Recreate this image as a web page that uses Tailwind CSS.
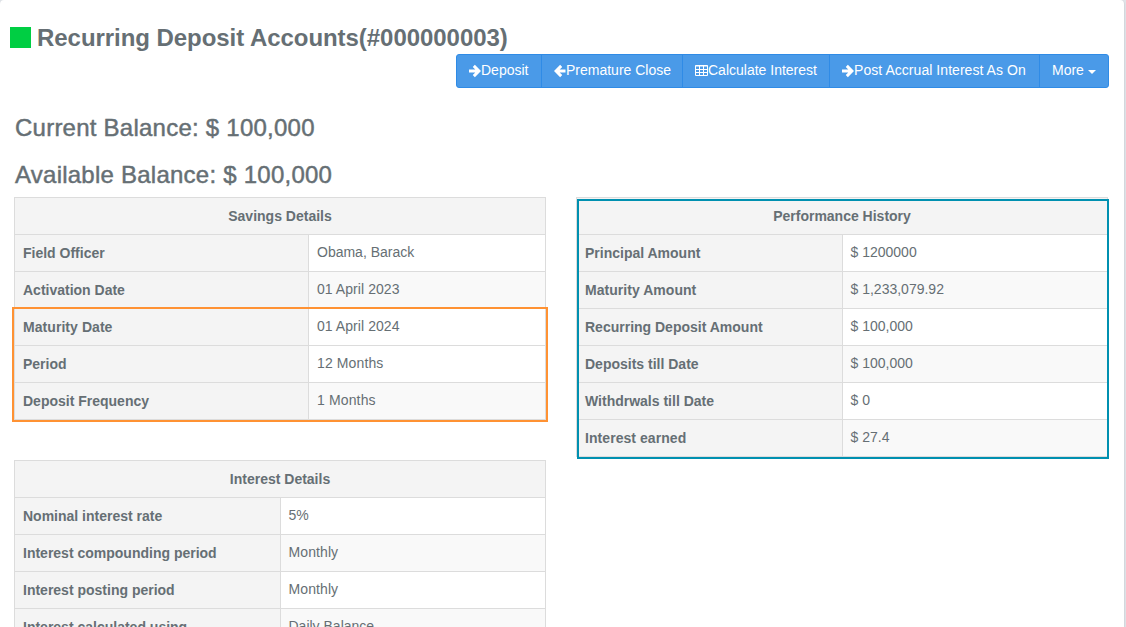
<!DOCTYPE html>
<html lang="en">
<head>
<meta charset="utf-8">
<title>Recurring Deposit Accounts</title>
<script src="https://cdn.jsdelivr.net/npm/@tailwindcss/browser@4"></script>
</head>
<body class="h-[627px] overflow-hidden bg-[#dfe3e8] font-['Liberation_Sans',Arial,sans-serif] text-sm text-[#666f74]">
<main class="flex h-[627px] w-[1124px] flex-col overflow-hidden rounded-t bg-white shadow-[0_1px_2px_rgba(0,0,0,0.2)]">
  <header class="flex h-[54px] shrink-0 items-center gap-[6px] pt-[21px] pl-[10px]">
    <span class="size-[21px] bg-[#00ce43]"></span>
    <h1 class="text-2xl font-bold tracking-[-0.05px] whitespace-nowrap">Recurring Deposit Accounts(#000000003)</h1>
  </header>

  <nav class="mr-[15px] flex h-[34px] w-[653px] shrink-0 self-end overflow-hidden rounded-[3px] border border-[#2f8be6] bg-[#4a9ae8] leading-[31px] whitespace-nowrap text-white">
    <a class="flex w-[85px] border-r border-[#2f8be6] pl-[11px]"><svg class="mt-[9px] h-[14px] w-[13px] shrink-0" viewBox="0 0 13 14" fill="none" stroke="currentColor" stroke-width="3"><path d="M1 7H10.5M5.8 1.9L10.9 7L5.8 12.1"/></svg>Deposit</a>
    <a class="flex w-[141px] border-r border-[#2f8be6] pl-[12px]"><svg class="mt-[9px] h-[14px] w-[12px] shrink-0" viewBox="0 0 12 14" fill="none" stroke="currentColor" stroke-width="3"><path d="M11.5 7H2.5M7.2 1.9L2.1 7L7.2 12.1"/></svg>Premature Close</a>
    <a class="flex w-[147px] border-r border-[#2f8be6] pl-[12px]"><svg class="mt-[9px] h-[12px] w-[13px] shrink-0" viewBox="0 0 13 12" fill="none" stroke="currentColor"><path d="M.5 1.5H12.5V11.5H.5ZM.5 2H12.5M.5 5.5H12.5M.5 8.5H12.5M4.5 1V12M8.5 1V12"/></svg>Calculate Interest</a>
    <a class="flex w-[210px] border-r border-[#2f8be6] pl-[12px] tracking-[0.05px]"><svg class="mt-[9px] h-[14px] w-[12px] shrink-0" viewBox="0 0 12 14" fill="none" stroke="currentColor" stroke-width="3"><path d="M0 7H9.5M4.8 1.9L9.9 7L4.8 12.1"/></svg>Post Accrual Interest As On</a>
    <a class="flex pl-[12px]">More<svg class="mt-[15px] ml-[4px] h-[4px] w-[8px]" viewBox="0 0 8 4" fill="currentColor"><path d="M0 0H8L4 4Z"/></svg></a>
  </nav>

  <section class="flex h-[109px] shrink-0 flex-col pt-[16px] pl-[15px] text-2xl leading-[47px] tracking-[0.24px] whitespace-nowrap [-webkit-text-stroke:0.45px_#666f74]">
    <h2>Current Balance: $ 100,000</h2>
    <h2>Available Balance: $ 100,000</h2>
  </section>

  <div class="flex min-h-0 flex-1 gap-[30px] pl-[14px]">
    <div class="flex w-[532px] flex-col gap-[40px] *:shrink-0">
      <section class="relative border-x border-t border-[#dcdcdc] *:h-[37px] *:border-b *:border-[#dcdcdc]">
        <h3 class="bg-[#f4f4f4] text-center leading-[36px] font-bold">Savings Details</h3>
        <div class="flex"><b class="w-[294px] border-r border-[#dcdcdc] bg-[#f4f4f4] pl-[8px] leading-[36px]">Field Officer</b><span class="flex-1 pl-[8px] leading-[34px]">Obama, Barack</span></div>
        <div class="flex"><b class="w-[294px] border-r border-[#dcdcdc] bg-[#f4f4f4] pl-[8px] leading-[36px]">Activation Date</b><span class="flex-1 bg-[#f9f9f9] pl-[8px] leading-[34px] tracking-[0.06px]">01 April 2023</span></div>
        <div class="flex"><b class="w-[294px] border-r border-[#dcdcdc] bg-[#f4f4f4] pl-[8px] leading-[36px] tracking-[0.06px]">Maturity Date</b><span class="flex-1 pl-[8px] leading-[34px] tracking-[0.06px]">01 April 2024</span></div>
        <div class="flex"><b class="w-[294px] border-r border-[#dcdcdc] bg-[#f4f4f4] pl-[8px] leading-[36px]">Period</b><span class="flex-1 pl-[8px] leading-[34px] tracking-[0.12px]">12 Months</span></div>
        <div class="flex"><b class="w-[294px] border-r border-[#dcdcdc] bg-[#f4f4f4] pl-[8px] leading-[36px]">Deposit Frequency</b><span class="flex-1 bg-[#f9f9f9] pl-[8px] leading-[34px] tracking-[0.14px]">1 Months</span></div>
        <i class="absolute top-[109px] left-[-3px] h-[115px]! w-[536px] border-2! border-[#ff9233]!"></i>
      </section>
      <section class="border-x border-t border-[#dcdcdc] *:h-[37px] *:border-b *:border-[#dcdcdc]">
        <h3 class="bg-[#f4f4f4] text-center leading-[36px] font-bold">Interest Details</h3>
        <div class="flex"><b class="w-[266px] border-r border-[#dcdcdc] bg-[#f4f4f4] pl-[8px] leading-[36px]">Nominal interest rate</b><span class="flex-1 pl-[7.5px] leading-[34px]">5%</span></div>
        <div class="flex"><b class="w-[266px] border-r border-[#dcdcdc] bg-[#f4f4f4] pl-[8px] leading-[36px]">Interest compounding period</b><span class="flex-1 bg-[#f9f9f9] pl-[7.5px] leading-[34px] tracking-[0.1px]">Monthly</span></div>
        <div class="flex"><b class="w-[266px] border-r border-[#dcdcdc] bg-[#f4f4f4] pl-[8px] leading-[36px]">Interest posting period</b><span class="flex-1 pl-[7.5px] leading-[34px] tracking-[0.1px]">Monthly</span></div>
        <div class="flex"><b class="w-[266px] border-r border-[#dcdcdc] bg-[#f4f4f4] pl-[8px] leading-[36px]">Interest calculated using</b><span class="flex-1 bg-[#f9f9f9] pl-[7.5px] leading-[34px]">Daily Balance</span></div>
      </section>
    </div>
    <section class="relative w-[532px] self-start border-x border-t border-[#dcdcdc] *:h-[37px] *:border-b *:border-[#dcdcdc]">
      <h3 class="bg-[#f4f4f4] text-center leading-[36px] font-bold">Performance History</h3>
      <div class="flex"><b class="w-[266px] border-r border-[#dcdcdc] bg-[#f4f4f4] pl-[8px] leading-[36px]">Principal Amount</b><span class="flex-1 pl-[7.5px] leading-[34px]">$ 1200000</span></div>
      <div class="flex"><b class="w-[266px] border-r border-[#dcdcdc] bg-[#f4f4f4] pl-[8px] leading-[36px] tracking-[0.04px]">Maturity Amount</b><span class="flex-1 bg-[#f9f9f9] pl-[7.5px] leading-[34px]">$ 1,233,079.92</span></div>
      <div class="flex"><b class="w-[266px] border-r border-[#dcdcdc] bg-[#f4f4f4] pl-[8px] leading-[36px]">Recurring Deposit Amount</b><span class="flex-1 pl-[7.5px] leading-[34px]">$ 100,000</span></div>
      <div class="flex"><b class="w-[266px] border-r border-[#dcdcdc] bg-[#f4f4f4] pl-[8px] leading-[36px]">Deposits till Date</b><span class="flex-1 bg-[#f9f9f9] pl-[7.5px] leading-[34px]">$ 100,000</span></div>
      <div class="flex"><b class="w-[266px] border-r border-[#dcdcdc] bg-[#f4f4f4] pl-[8px] leading-[36px]">Withdrwals till Date</b><span class="flex-1 pl-[7.5px] leading-[34px]">$ 0</span></div>
      <div class="flex"><b class="w-[266px] border-r border-[#dcdcdc] bg-[#f4f4f4] pl-[8px] leading-[36px] tracking-[0.06px]">Interest earned</b><span class="flex-1 bg-[#f9f9f9] pl-[7.5px] leading-[34px]">$ 27.4</span></div>
      <i class="absolute top-[1px] left-0 h-[260px]! w-[532px] border-2! border-[#0090b0]!"></i>
    </section>
  </div>
</main>
</body>
</html>
